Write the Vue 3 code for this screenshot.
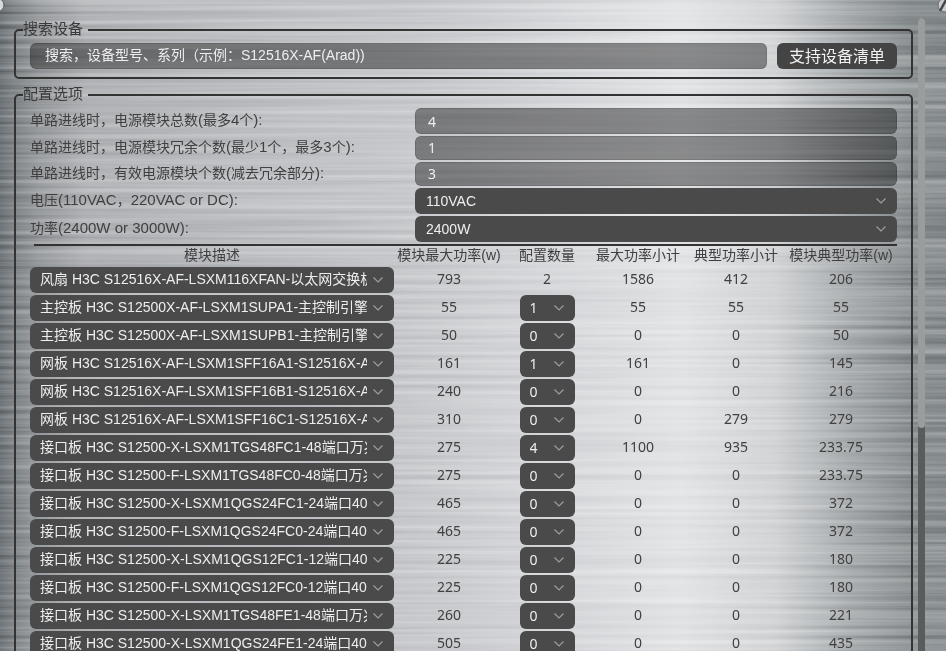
<script setup>
import { ref } from 'vue'

const search = ref('')
const split = (text) => text.match(/[\x00-\x7f]+|[^\x00-\x7f]+/g).map((t) => ({ t, latin: /^[\x00-\x7f]/.test(t) }))

const options = [
  { label: '单路进线时，电源模块总数(最多4个):', value: '4', kind: 'input', tall: true },
  { label: '单路进线时，电源模块冗余个数(最少1个，最多3个):', value: '1', kind: 'input' },
  { label: '单路进线时，有效电源模块个数(减去冗余部分):', value: '3', kind: 'input' },
  { label: '电压(110VAC，220VAC or DC):', value: '110VAC', kind: 'select', tall: true, choices: ['110VAC', '220VAC', 'DC'] },
  { label: '功率(2400W or 3000W):', value: '2400W', kind: 'select', tall: true, choices: ['2400W', '3000W'] },
]
const headers = ['模块描述', '模块最大功率(w)', '配置数量', '最大功率小计', '典型功率小计', '模块典型功率(w)']
const modules = [
  ['风扇 H3C S12516X-AF-LSXM116XFAN-以太网交换机风扇模块', 793, 2, 1586, 412, 206, true],
  ['主控板 H3C S12500X-AF-LSXM1SUPA1-主控制引擎模块', 55, 1, 55, 55, 55],
  ['主控板 H3C S12500X-AF-LSXM1SUPB1-主控制引擎模块', 50, 0, 0, 0, 50],
  ['网板 H3C S12516X-AF-LSXM1SFF16A1-S12516X-AF交换网板', 161, 1, 161, 0, 145],
  ['网板 H3C S12516X-AF-LSXM1SFF16B1-S12516X-AF交换网板', 240, 0, 0, 0, 216],
  ['网板 H3C S12516X-AF-LSXM1SFF16C1-S12516X-AF交换网板', 310, 0, 0, 279, 279],
  ['接口板 H3C S12500-X-LSXM1TGS48FC1-48端口万兆以太网接口板', 275, 4, 1100, 935, 233.75],
  ['接口板 H3C S12500-F-LSXM1TGS48FC0-48端口万兆以太网接口板', 275, 0, 0, 0, 233.75],
  ['接口板 H3C S12500-X-LSXM1QGS24FC1-24端口40G以太网接口板', 465, 0, 0, 0, 372],
  ['接口板 H3C S12500-F-LSXM1QGS24FC0-24端口40G以太网接口板', 465, 0, 0, 0, 372],
  ['接口板 H3C S12500-X-LSXM1QGS12FC1-12端口40G以太网接口板', 225, 0, 0, 0, 180],
  ['接口板 H3C S12500-F-LSXM1QGS12FC0-12端口40G以太网接口板', 225, 0, 0, 0, 180],
  ['接口板 H3C S12500-X-LSXM1TGS48FE1-48端口万兆以太网接口板', 260, 0, 0, 0, 221],
  ['接口板 H3C S12500-X-LSXM1QGS24FE1-24端口40G以太网接口板', 505, 0, 0, 0, 435],
]
const counts = [0, 1, 2, 3, 4]
</script>

<template>
  <div class="page">
    <svg class="metal" width="946" height="651" aria-hidden="true">
      <defs>
        <filter id="brush" x="0" y="0" width="100%" height="100%" color-interpolation-filters="sRGB">
          <feTurbulence type="fractalNoise" baseFrequency="0.0025 0.2" numOctaves="3" seed="11" />
          <feColorMatrix type="matrix" values="1.6 0 0 0 -0.3  1.6 0 0 0 -0.3  1.6 0 0 0 -0.3  0 0 0 0 1" />
        </filter>
      </defs>
      <rect width="946" height="651" filter="url(#brush)" />
    </svg>

    <svg class="screw screw-left" width="16" height="16" viewBox="0 0 16 16" aria-hidden="true">
      <circle cx="8" cy="8" r="7" fill="#d6d8da" stroke="#55585a" />
    </svg>
    <svg class="screw screw-right" width="16" height="16" viewBox="0 0 16 16" aria-hidden="true">
      <circle cx="8" cy="8" r="7" fill="#c6c8ca" stroke="#6a6d70" />
      <path d="M3 14 9 3" stroke="#44474a" stroke-width="2.500" />
    </svg>

    <div class="scrollbar"><div class="thumb"></div></div>

    <main class="content">
      <fieldset class="group search-group">
        <legend>搜索设备</legend>
        <div class="search-row">
          <input v-model="search" class="field search-input" placeholder="搜索，设备型号、系列（示例：S12516X-AF(Arad))" />
          <button class="list-button" type="button">支持设备清单</button>
        </div>
      </fieldset>

      <fieldset class="group config-group">
        <legend>配置选项</legend>

        <div v-for="opt in options" :key="opt.label" class="option" :class="{ tall: opt.tall }">
          <label class="option-label">
            <span v-for="s in split(opt.label)" :key="s.t" :class="{ latin: s.latin }">{{ s.t }}</span>
          </label>
          <input v-if="opt.kind === 'input'" class="field option-control" :value="opt.value" />
          <select v-else class="dark-select option-control">
            <option v-for="c in opt.choices" :key="c">{{ c }}</option>
          </select>
        </div>

        <div class="grid head">
          <div v-for="h in headers" :key="h" class="cell">{{ h }}</div>
        </div>
        <div v-for="m in modules" :key="m[0]" class="grid body-row">
          <select class="dark-select desc-select"><option>{{ m[0] }}</option></select>
          <div class="cell num">{{ m[1] }}</div>
          <div class="cell num has-select" v-if="!m[6]">
            <select class="dark-select count-select" :value="m[2]">
              <option v-for="c in counts" :key="c" :value="c">{{ c }}</option>
            </select>
          </div>
          <div class="cell num" v-else>{{ m[2] }}</div>
          <div class="cell num">{{ m[3] }}</div>
          <div class="cell num">{{ m[4] }}</div>
          <div class="cell num">{{ m[5] }}</div>
        </div>
      </fieldset>
    </main>
  </div>
</template>

<style>
html, body { margin: 0; overflow: hidden; }
</style>

<style scoped>
.page {
  position: relative;
  width: 946px;
  height: 651px;
  overflow: hidden;
  font-family: "Liberation Sans", "Noto Sans CJK SC", sans-serif;
  font-size: 14px;
  color: #404040;
  background: linear-gradient(90deg, #6f7578 0, #7f8487 1.2%, #9a9da0 4%, #b3b5b8 9%, #bdbfc3 25%, #c6c8cb 42%, #d6d7da 58%, #e3e4e6 72%, #d2d4d6 82%, #a8acae 90%, #8e9395 96%, #8a9092 100%);
}
.latin { font-size: 15px; }
.metal {
  position: absolute;
  inset: 0;
  mix-blend-mode: overlay;
  opacity: .22;
}
.screw { position: absolute; top: -3px; }
.screw-left { left: -11px; }
.screw-right { right: -7px; }
.scrollbar {
  position: absolute;
  left: 918px;
  top: 18px;
  bottom: -6px;
  width: 7px;
  border-radius: 4px;
  background: #595b5c;
}
.thumb {
  height: 410px;
  border-radius: 4px;
  background: #9b9d9d;
}
.content {
  position: relative;
  width: 899px;
  margin-left: 14px;
  padding-top: 21px;
}
.group {
  margin: 0;
  padding: 0 14px;
  border: 2px solid #333;
  border-radius: 5px;
  box-sizing: border-box;
  min-width: 0;
}
legend {
  margin-left: -7px;
  padding: 0 5px 2px 0;
  font-size: 15px;
  line-height: 16px;
  color: #3a3a3a;
}
.search-group { padding-top: 4px; padding-bottom: 8px; margin-bottom: 7px; }
.search-row { display: flex; gap: 10px; }
.field {
  box-sizing: border-box;
  border: 1px solid rgba(0, 0, 0, .12);
  border-radius: 6px;
  background: rgba(0, 0, 0, .4);
  color: #eee;
  font: inherit;
  outline: none;
}
.search-input {
  flex: 1;
  min-width: 0;
  height: 26px;
  padding: 0 14px 2px;
}
.search-input::placeholder { color: #eee; opacity: 1; }
.list-button {
  width: 120px;
  height: 26px;
  padding: 0 0 5px;
  border: 0;
  border-radius: 6px;
  background: #444;
  color: #f2f2f2;
  font: inherit;
  font-size: 16px;
}
.config-group { padding-top: 4px; height: 700px; }
.option {
  display: flex;
  align-items: center;
  height: 24px;
  margin-bottom: 2px;
}
.option.tall { height: 26px; }
.option-label { width: 385px; flex: none; padding-bottom: 4px; }
.option-control { flex: 1; min-width: 0; height: 100%; }
.option .field { padding: 0 12px; font-family: "Noto Sans", sans-serif; }
.option:not(.tall) .field { padding-bottom: 2px; }
.option .dark-select { padding-left: 11px; }
.dark-select {
  appearance: none;
  box-sizing: border-box;
  height: 26px;
  border: 0;
  border-radius: 6px;
  outline: none;
  color: #eee;
  font: inherit;
  padding: 0 27px 0 10px;
  background: #4a4a4a url("data:image/svg+xml,%3Csvg xmlns='http://www.w3.org/2000/svg' width='12' height='8' viewBox='0 0 12 8'%3E%3Cpath d='M1.5 1.5 6 6l4.500-4.500' fill='none' stroke='%23a0a0a0' stroke-width='1.100'/%3E%3C/svg%3E") no-repeat right 10px center;
}
.grid {
  display: grid;
  grid-template-columns: 367px 104px 92px 90px 106px 104px;
}
.head {
  margin-top: 2px;
  margin-left: 4px;
  height: 21px;
  border-top: 2px solid #333;
  grid-template-columns: 363px 104px 92px 90px 106px 104px;
  line-height: 19px;
  align-items: start;
}
.head .cell:first-child { padding-right: 7px; }
.body-row { height: 26px; margin-bottom: 2px; }
.cell {
  display: flex;
  align-items: center;
  justify-content: center;
  white-space: nowrap;
}
.num { font-family: "Noto Sans", sans-serif; padding-bottom: 4px; }
.num.has-select { padding-bottom: 0; }
.desc-select { width: 364px; padding-bottom: 2px; }
.count-select { width: 55px; padding-bottom: 2px; }
</style>
